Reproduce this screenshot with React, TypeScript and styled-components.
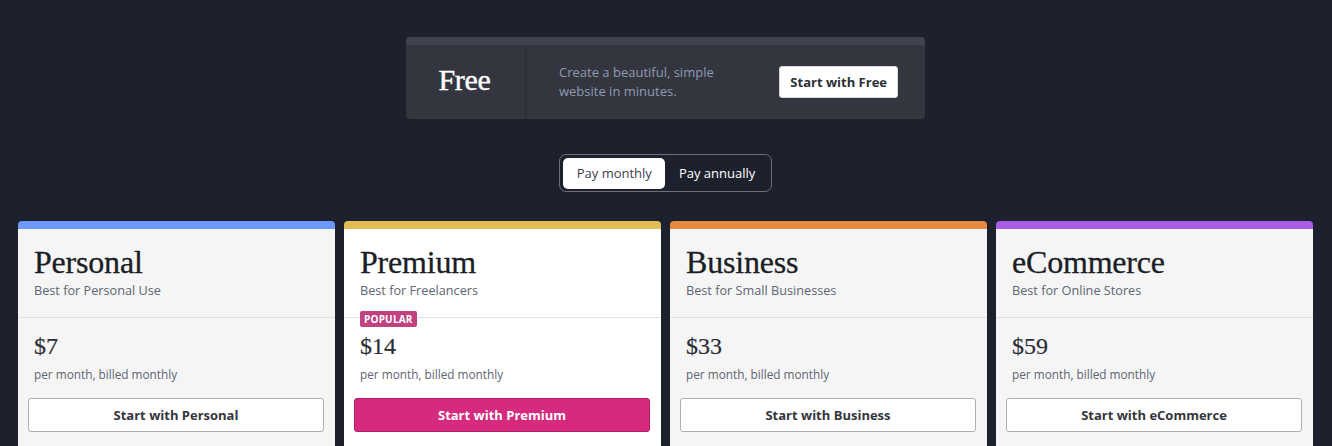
import React from "react";
import styled, { createGlobalStyle } from "styled-components";

const Global = createGlobalStyle`
  html, body { margin: 0; padding: 0; background: #1d212d; }
  body { font-family: "Open Sans", "Liberation Sans", sans-serif; overflow: hidden; }
  * { box-sizing: border-box; }
`;

const Page = styled.div`
  display: flex;
  flex-direction: column;
  align-items: center;
  padding: 37px 19px 0 18px;
  height: 446px;
  & > * { flex-shrink: 0; }
`;

const Banner = styled.div`
  width: 519px;
  border-radius: 4px;
  overflow: hidden;
  background: #33363f;
  border-top: 8px solid #40434e;
  display: flex;
  height: 82px;
`;

const BannerName = styled.div`
  width: 120px;
  border-right: 1px solid #2a2d35;
  display: flex;
  align-items: center;
  justify-content: center;
  font-family: "Liberation Serif", serif;
  font-size: 30px;
  color: #ffffff;
  padding-right: 2px;
  padding-bottom: 5px;
  letter-spacing: -0.3px;
  -webkit-text-stroke: 0.4px #ffffff;
`;

const BannerBody = styled.div`
  flex: 1;
  display: flex;
  align-items: center;
  justify-content: space-between;
  padding: 0 27px 0 33px;
`;

const BannerText = styled.p`
  margin: 0;
  font-size: 13px;
  line-height: 19px;
  color: #8f9ab3;
  width: 200px;
`;

const WhiteButton = styled.button`
  font-family: "Open Sans", sans-serif;
  font-weight: 700;
  font-size: 13px;
  color: #2c2f36;
  background: #ffffff;
  border: 1px solid #d8d8d8;
  border-radius: 3px;
  height: 32px;
  padding: 0 10px;
  cursor: pointer;
`;

const Toggle = styled.div`
  margin-top: 35px;
  display: flex;
  padding: 2px 3px;
  border: 1px solid #6e717b;
  border-radius: 7px;
  height: 38px;
  align-items: center;
`;

const ToggleOption = styled.button<{ $active?: boolean }>`
  font-family: "Open Sans", sans-serif;
  font-size: 13px;
  height: 31px;
  padding: 0 13px 0 14px;
  border: none;
  border-radius: 5px;
  cursor: pointer;
  white-space: nowrap;
  background: ${(p) => (p.$active ? "#ffffff" : "transparent")};
  color: ${(p) => (p.$active ? "#3c4250" : "#ffffff")};
`;

const Cards = styled.div`
  margin-top: 29px;
  width: 100%;
  display: grid;
  grid-template-columns: repeat(4, 1fr);
  gap: 9px;
`;

const Card = styled.div<{ $accent: string; $highlight?: boolean }>`
  border-top: 8px solid ${(p) => p.$accent};
  border-radius: 4px 4px 0 0;
  background: ${(p) => (p.$highlight ? "#ffffff" : "#f5f5f5")};
  height: 240px;
`;

const CardHead = styled.div`
  padding: 15px 16px 17px;
  border-bottom: 1px solid #e1e1e1;
`;

const PlanName = styled.h2`
  margin: 0;
  font-family: "Liberation Serif", serif;
  font-weight: 400;
  font-size: 32px;
  line-height: 36px;
  color: #1b1e25;
  letter-spacing: -0.2px;
  -webkit-text-stroke: 0.3px #1b1e25;
`;

const PlanSub = styled.div`
  font-size: 12.7px;
  line-height: 20px;
  color: #5e6573;
`;

const CardBody = styled.div`
  position: relative;
  padding: 13px 11px 0 10px;
`;

const Badge = styled.span`
  position: absolute;
  top: -7px;
  left: 16px;
  background: #c2417f;
  color: #ffffff;
  font-size: 10px;
  font-weight: 700;
  line-height: 16px;
  padding: 0 4px;
  border-radius: 2px;
  letter-spacing: 0.2px;
`;

const Price = styled.div`
  padding-left: 6px;
  font-family: "Liberation Serif", serif;
  font-size: 24px;
  line-height: 30px;
  color: #2a2d35;
  -webkit-text-stroke: 0.2px #2a2d35;
`;

const Billing = styled.div`
  padding-left: 6px;
  margin-top: 4px;
  font-size: 11.8px;
  line-height: 18px;
  color: #5e6573;
`;

const CardButton = styled.button<{ $primary?: boolean }>`
  margin-top: 15px;
  width: 100%;
  height: 34px;
  font-family: "Open Sans", sans-serif;
  font-weight: 700;
  font-size: 13px;
  border-radius: 3px;
  cursor: pointer;
  background: ${(p) => (p.$primary ? "#d52a7d" : "#ffffff")};
  color: ${(p) => (p.$primary ? "#ffffff" : "#33363d")};
  border: 1px solid ${(p) => (p.$primary ? "#b31e66" : "#aeaeae")};
`;

const plans = [
  { name: "Personal", sub: "Best for Personal Use", price: "$7", accent: "#6b98fb" },
  { name: "Premium", sub: "Best for Freelancers", price: "$14", accent: "#e2bc55", popular: true },
  { name: "Business", sub: "Best for Small Businesses", price: "$33", accent: "#e48a42" },
  { name: "eCommerce", sub: "Best for Online Stores", price: "$59", accent: "#a75de6" },
];

export default function App() {
  return (
    <>
      <Global />
      <Page>
        <Banner>
          <BannerName>Free</BannerName>
          <BannerBody>
            <BannerText>Create a beautiful, simple website in minutes.</BannerText>
            <WhiteButton>Start with Free</WhiteButton>
          </BannerBody>
        </Banner>
        <Toggle>
          <ToggleOption $active>Pay monthly</ToggleOption>
          <ToggleOption>Pay annually</ToggleOption>
        </Toggle>
        <Cards>
          {plans.map((p) => (
            <Card key={p.name} $accent={p.accent} $highlight={p.popular}>
              <CardHead>
                <PlanName>{p.name}</PlanName>
                <PlanSub>{p.sub}</PlanSub>
              </CardHead>
              <CardBody>
                {p.popular && <Badge>POPULAR</Badge>}
                <Price>{p.price}</Price>
                <Billing>per month, billed monthly</Billing>
                <CardButton $primary={p.popular}>Start with {p.name}</CardButton>
              </CardBody>
            </Card>
          ))}
        </Cards>
      </Page>
    </>
  );
}
